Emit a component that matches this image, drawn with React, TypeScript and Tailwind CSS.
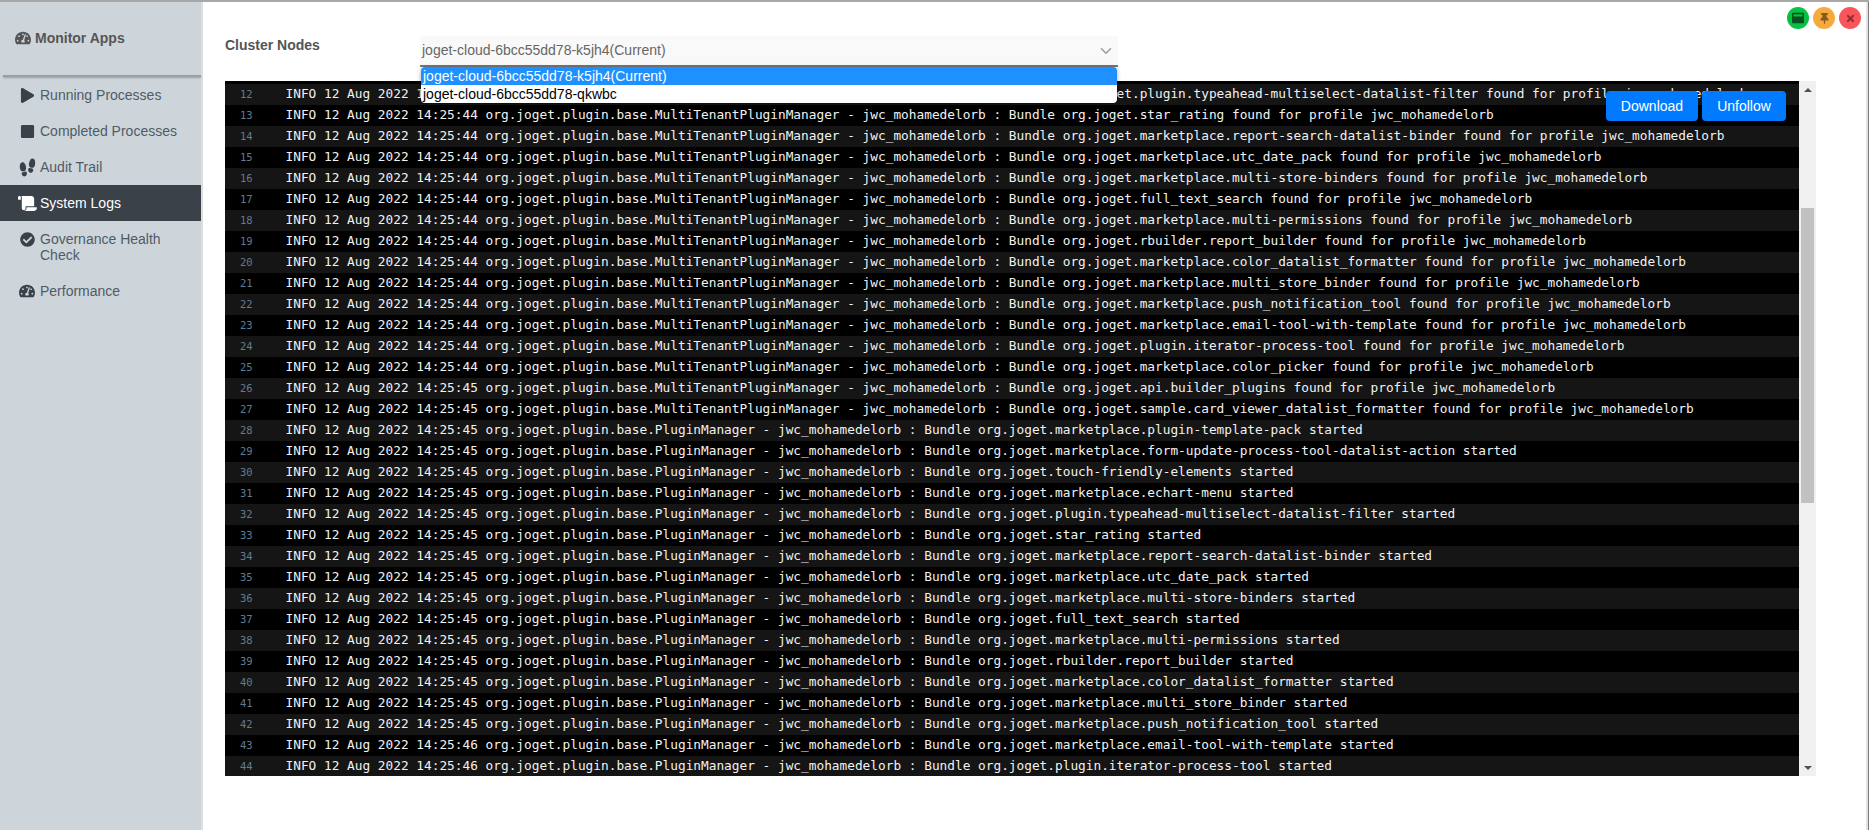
import { ChevronDown } from 'lucide-react'
import type { ReactNode } from 'react'
import {
  FaCheckCircle,
  FaPlay,
  FaScroll,
  FaStop,
  FaTachometerAlt,
  FaThumbtack,
  FaTimes,
  FaWindowMaximize,
} from 'react-icons/fa'
import { IoFootsteps } from 'react-icons/io5'

const navItems: { label: string; icon: ReactNode; active?: boolean }[] = [
  { label: 'Running Processes', icon: <FaPlay size={15} /> },
  { label: 'Completed Processes', icon: <FaStop size={15} /> },
  { label: 'Audit Trail', icon: <IoFootsteps size={19} /> },
  { label: 'System Logs', icon: <FaScroll size={19} />, active: true },
  { label: 'Governance Health Check', icon: <FaCheckCircle size={15} /> },
  { label: 'Performance', icon: <FaTachometerAlt size={16} /> },
]

const foundBundles = [
  ['org.joget.plugin.typeahead-multiselect-datalist-filter', '44'],
  ['org.joget.star_rating', '44'],
  ['org.joget.marketplace.report-search-datalist-binder', '44'],
  ['org.joget.marketplace.utc_date_pack', '44'],
  ['org.joget.marketplace.multi-store-binders', '44'],
  ['org.joget.full_text_search', '44'],
  ['org.joget.marketplace.multi-permissions', '44'],
  ['org.joget.rbuilder.report_builder', '44'],
  ['org.joget.marketplace.color_datalist_formatter', '44'],
  ['org.joget.marketplace.multi_store_binder', '44'],
  ['org.joget.marketplace.push_notification_tool', '44'],
  ['org.joget.marketplace.email-tool-with-template', '44'],
  ['org.joget.plugin.iterator-process-tool', '44'],
  ['org.joget.marketplace.color_picker', '44'],
  ['org.joget.api.builder_plugins', '45'],
  ['org.joget.sample.card_viewer_datalist_formatter', '45'],
]

const startedBundles = [
  ['org.joget.marketplace.plugin-template-pack', '45'],
  ['org.joget.marketplace.form-update-process-tool-datalist-action', '45'],
  ['org.joget.touch-friendly-elements', '45'],
  ['org.joget.marketplace.echart-menu', '45'],
  ['org.joget.plugin.typeahead-multiselect-datalist-filter', '45'],
  ['org.joget.star_rating', '45'],
  ['org.joget.marketplace.report-search-datalist-binder', '45'],
  ['org.joget.marketplace.utc_date_pack', '45'],
  ['org.joget.marketplace.multi-store-binders', '45'],
  ['org.joget.full_text_search', '45'],
  ['org.joget.marketplace.multi-permissions', '45'],
  ['org.joget.rbuilder.report_builder', '45'],
  ['org.joget.marketplace.color_datalist_formatter', '45'],
  ['org.joget.marketplace.multi_store_binder', '45'],
  ['org.joget.marketplace.push_notification_tool', '45'],
  ['org.joget.marketplace.email-tool-with-template', '46'],
  ['org.joget.plugin.iterator-process-tool', '46'],
]

const logLines = [
  ...foundBundles.map(
    ([name, sec]) =>
      `INFO 12 Aug 2022 14:25:${sec} org.joget.plugin.base.MultiTenantPluginManager - jwc_mohamedelorb : Bundle ${name} found for profile jwc_mohamedelorb`,
  ),
  ...startedBundles.map(
    ([name, sec]) =>
      `INFO 12 Aug 2022 14:25:${sec} org.joget.plugin.base.PluginManager - jwc_mohamedelorb : Bundle ${name} started`,
  ),
]

function Sidebar() {
  return (
    <aside className="w-[203px] shrink-0 bg-[#cdd5db] border-r-2 border-[#dedede]">
      <div className="h-[73px] pl-[15px] pt-[28px] flex items-start gap-[4px] text-[14px] leading-[16px] font-bold text-[#555]">
        <FaTachometerAlt size={16} />
        Monitor Apps
      </div>
      <div className="h-[2px] ml-[3px] bg-[#9aa0a5] shadow-[0_1px_2px_rgba(0,0,0,0.25)]" />
      <nav>
        {navItems.map((item) => (
          <div
            key={item.label}
            className={`flex gap-[6px] pl-[20px] pr-[10px] py-[10px] text-[14px] leading-[16px] ${
              item.active ? 'bg-[#3a4149] text-white' : 'text-[#4f5b66]'
            }`}
          >
            <span className={`w-[14px] h-[16px] shrink-0 flex items-center justify-center ${item.active ? 'text-white' : 'text-[#3a4149]'}`}>
              <span className="shrink-0">{item.icon}</span>
            </span>
            <span>{item.label}</span>
          </div>
        ))}
      </nav>
    </aside>
  )
}

function WindowControls() {
  return (
    <div className="absolute top-[5px] right-[8px] flex gap-[4px]">
      <span className="w-[22px] h-[22px] rounded-full bg-[#06c143] flex items-center justify-center text-[#06501f]">
        <FaWindowMaximize size={12} />
      </span>
      <span className="w-[22px] h-[22px] rounded-full bg-[#f4aa3c] flex items-center justify-center text-[#8a5a1c]">
        <FaThumbtack size={11} />
      </span>
      <span className="w-[22px] h-[22px] rounded-full bg-[#f8565a] flex items-center justify-center text-[#8c2f33]">
        <FaTimes size={11} />
      </span>
    </div>
  )
}

function NodeSelect() {
  return (
    <div className="relative w-[698px]">
      <div className="h-[31px] bg-[#f9f9f9] border-b-2 border-[#777] flex items-center justify-between pl-[2px] pr-[3px] text-[14px] text-[#666]">
        <span>joget-cloud-6bcc55dd78-k5jh4(Current)</span>
        <ChevronDown size={18} className="text-[#999]" />
      </div>
      {/* lista aberta por cima dos logs */}
      <div className="absolute z-10 top-[31px] left-[1px] w-[696px] bg-white rounded-[4px] overflow-hidden shadow-[0_1px_4px_rgba(0,0,0,0.35)] text-[14px] leading-[18px] text-black">
        <div className="bg-[#1e90ff] text-white pl-[2px]">joget-cloud-6bcc55dd78-k5jh4(Current)</div>
        <div className="pl-[2px]">joget-cloud-6bcc55dd78-qkwbc</div>
      </div>
    </div>
  )
}

function LogPanel() {
  return (
    <div className="relative flex h-[695px] w-[1591px]">
      <div className="flex-1 bg-black pt-[3px] overflow-hidden font-['DejaVu_Sans_Mono',monospace] text-[12.79px] text-[#f2f2f2]">
        {logLines.map((line, index) => (
          <div key={index} className={`flex h-[21px] whitespace-pre ${index % 2 === 0 ? 'bg-[#151515]' : 'bg-black'}`}>
            <span className="w-[60.5px] shrink-0 pl-[15px] text-[10.5px] leading-[21px] text-[#5f7d92]">{index + 12}</span>
            <span className="leading-[19px]">{line}</span>
          </div>
        ))}
      </div>

      <div className="w-[17px] shrink-0 bg-[#f0f0f0] flex flex-col">
        <div className="h-[17px] flex items-center justify-center">
          <span className="w-0 h-0 border-x-[4px] border-x-transparent border-b-[4px] border-b-[#505050]" />
        </div>
        <div className="mt-[110px] mx-[2px] h-[295px] bg-[#c1c1c1]" />
        <div className="mt-auto h-[17px] flex items-center justify-center">
          <span className="w-0 h-0 border-x-[4px] border-x-transparent border-t-[4px] border-t-[#505050]" />
        </div>
      </div>

      <div className="absolute top-[10px] right-[30px] flex gap-[4px] text-[14px] text-white">
        <button type="button" className="w-[92px] h-[30px] rounded-[4px] bg-[#007bff]">Download</button>
        <button type="button" className="w-[84px] h-[30px] rounded-[4px] bg-[#007bff]">Unfollow</button>
      </div>
    </div>
  )
}

export default function App() {
  return (
    <div className="relative h-screen w-full overflow-hidden bg-white border-t-[2px] border-[#a8a8a8] flex font-['Liberation_Sans',Arial,sans-serif]">
      <Sidebar />
      <main className="flex-1 pl-[22px] pt-[34px]">
        <div className="flex h-[45px]">
          <label className="w-[195px] pt-[1px] text-[14px] leading-[16px] font-bold text-[#555]">Cluster Nodes</label>
          <NodeSelect />
        </div>
        <LogPanel />
      </main>
      <div className="w-[3px] shrink-0 bg-[#e4e4e4] border-r border-[#777]" />
      <WindowControls />
    </div>
  )
}
